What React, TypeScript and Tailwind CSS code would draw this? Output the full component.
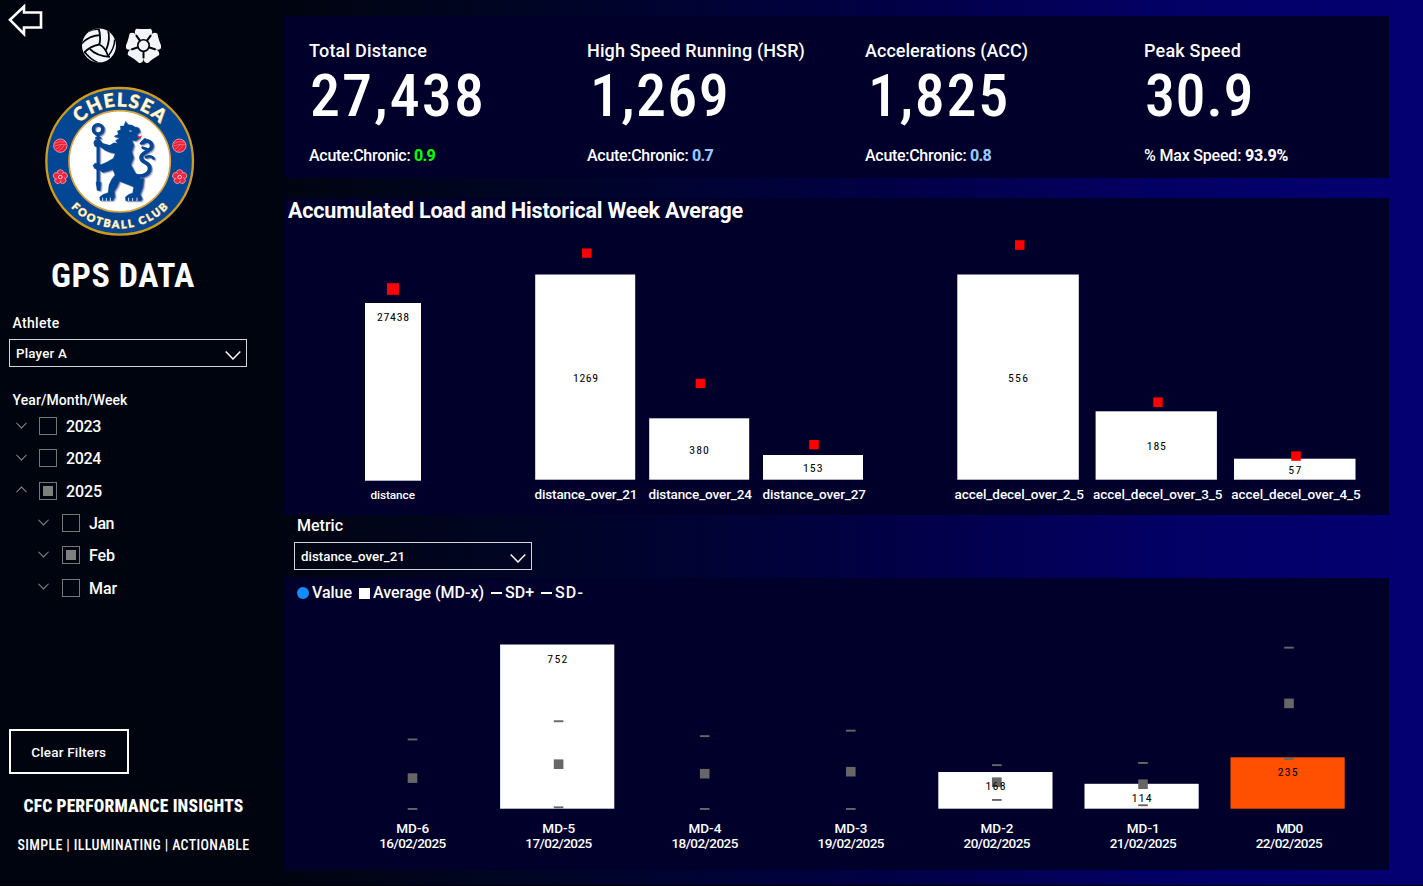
import { useLayoutEffect, useRef } from "react";

/** Text tracked so that its advance equals a given width. */
function Fit({ w, className = "", children }: { w: number; className?: string; children: string }) {
  const ref = useRef<HTMLSpanElement>(null);
  useLayoutEffect(() => {
    const el = ref.current;
    if (!el) return;
    el.style.letterSpacing = "0px";
    const natural = el.getBoundingClientRect().width;
    el.style.letterSpacing = `${(w - natural) / children.length}px`;
  }, [w, children]);
  return (
    <span ref={ref} className={`inline-block whitespace-pre ${className}`}>
      {children}
    </span>
  );
}

const kpis = [
  { title: "Total Distance", tw: 118, value: "27,438", vw: 176, indent: "ml-px", note: "Acute:Chronic: ", nw: 105, ratio: "0.9", rw: 21, color: "text-[#00ff00]" },
  { title: "High Speed Running (HSR)", tw: 218, value: "1,269", vw: 140, indent: "ml-[3px]", note: "Acute:Chronic: ", nw: 105, ratio: "0.7", rw: 21, color: "text-[#93c9ff]" },
  { title: "Accelerations (ACC)", tw: 163, value: "1,825", vw: 142, indent: "ml-[3px]", note: "Acute:Chronic: ", nw: 105, ratio: "0.8", rw: 21, color: "text-[#93c9ff]" },
  { title: "Peak Speed", tw: 97, value: "30.9", vw: 109, indent: "ml-px", note: "% Max Speed: ", nw: 101, ratio: "93.9%", rw: 43, color: "text-white" },
];

const loadBars = [
  { x: 365, w: 56, y: 303, b: 480.7, m: [387, 283.2, 12, 11.6], v: "27438", vx: 377, vw: 32, vy: 321, l: "distance", lx: 370.5, lw: 44.5, fs: 11.8 },
  { x: 535.2, w: 100, y: 274.5, b: 479.7, m: [582, 248.5, 9.6, 9.3], v: "1269", vx: 573, vw: 25, vy: 382, l: "distance_over_21", lx: 534.5, lw: 103, fs: 13.5 },
  { x: 649.2, w: 100, y: 418.3, b: 479.7, m: [695.6, 378.8, 9.6, 9.3], v: "380", vx: 689.3, vw: 19.5, vy: 454, l: "distance_over_24", lx: 648.5, lw: 103.5, fs: 13.5 },
  { x: 763, w: 100, y: 455, b: 479.7, m: [809.2, 440, 9.6, 9.3], v: "153", vx: 803, vw: 19.5, vy: 472, l: "distance_over_27", lx: 762.5, lw: 103.5, fs: 13.5 },
  { x: 957.3, w: 121.5, y: 274.5, b: 479.7, m: [1015, 240.2, 9.5, 9.6], v: "556", vx: 1008, vw: 20, vy: 382, l: "accel_decel_over_2_5", lx: 954.5, lw: 129.5, fs: 13.5 },
  { x: 1095.6, w: 121.3, y: 411.3, b: 479.7, m: [1153.3, 397.4, 9.4, 9.6], v: "185", vx: 1146.8, vw: 19, vy: 450, l: "accel_decel_over_3_5", lx: 1093, lw: 129.5, fs: 13.5 },
  { x: 1234, w: 121.5, y: 458.7, b: 479.7, m: [1291.2, 451.4, 9.6, 9.4], v: "57", vx: 1288.3, vw: 13, vy: 474, l: "accel_decel_over_4_5", lx: 1231.3, lw: 129.5, fs: 13.5 },
];

const days = [
  { c: 412.7, name: "MD-6", date: "16/02/2025", hi: 738.5, avg: 773.3, lo: 808 },
  { c: 558.8, name: "MD-5", date: "17/02/2025", hi: 720.3, avg: 759.4, lo: 806.4, top: 644.5, v: "752", vy: 663 },
  { c: 704.9, name: "MD-4", date: "18/02/2025", hi: 735.2, avg: 768.9, lo: 808 },
  { c: 851, name: "MD-3", date: "19/02/2025", hi: 729.7, avg: 766.9, lo: 808 },
  { c: 997, name: "MD-2", date: "20/02/2025", hi: 764.2, avg: 777.4, lo: 799, top: 772, v: "168", vy: 790.3 },
  { c: 1143.2, name: "MD-1", date: "21/02/2025", hi: 762, avg: 779.4, lo: 804.3, top: 783.8, v: "114", vy: 802.3 },
  { c: 1289.2, name: "MD0", date: "22/02/2025", hi: 646.7, avg: 698.6, lo: 758, top: 757.3, v: "235", vy: 776.3, hot: true },
];

function Chevron({ up = false, w, h, className }: { up?: boolean; w: number; h: number; className: string }) {
  return (
    <svg width={w} height={h} viewBox="0 0 14 8" fill="none" className={className}>
      <path d={up ? "M.5 7.5 7 .9l6.500 6.600" : "M.5.5 7 7.100 13.500.5"} stroke="currentColor" strokeWidth="1.300" />
    </svg>
  );
}

function Ball() {
  return (
    <svg width="34" height="35" viewBox="0 0 102 104">
      <defs>
        <clipPath id="ball"><circle cx="51" cy="52" r="51" /></clipPath>
      </defs>
      <g clipPath="url(#ball)">
        <rect width="102" height="104" fill="#f4f5f8" />
        <g fill="none" stroke="#00040f" strokeWidth="5.500">
          <path d="M49-2Q58 25 52 49Q69 56 78 83" />
          <path d="M52 49Q24 54 6 74" />
          <path d="M-2 47Q22 22 54 21" />
          <path d="M78 4Q86 34 72 66" />
          <path d="M24 63Q44 84 84 86" />
          <path d="M7 70Q22 92 52 106" strokeWidth="4.500" />
          <path d="M20 10Q34 2 52 4" strokeWidth="4" />
          <path d="M98 34Q98 60 78 84" strokeWidth="4.500" />
        </g>
      </g>
    </svg>
  );
}

function Rose() {
  return (
    <g>
      {[0, 72, 144, 216, 288].map((a) => (
        <path key={a} d="M-10-12L-25-35Q-28-44-21-50Q-10-49 0-49Q10-49 21-50Q28-44 25-35L10-12Z" fill="#f4f5f8" transform={`rotate(${a})`} />
      ))}
      {[36, 108, 180, 252, 324].map((a) => (
        <path key={a} d="M0-14V-38" stroke="#00040f" strokeWidth="6" transform={`rotate(${a})`} />
      ))}
      <circle r="17" fill="#f4f5f8" stroke="#00040f" strokeWidth="5" />
    </g>
  );
}

function RedBall({ x, y }: { x: number; y: number }) {
  return (
    <g transform={`translate(${x} ${y})`}>
      <circle r="20" fill="#ed1c32" stroke="#e7b5c4" strokeWidth="2.500" />
      <path d="M-16-7Q-4-14 15-11M-17 1Q0-6 18-4M-13 11Q0 3 4-5M-6 16Q8 9 12-3" fill="none" stroke="#f58796" strokeWidth="2" />
    </g>
  );
}

function RedRose({ x, y }: { x: number; y: number }) {
  return (
    <g transform={`translate(${x} ${y})`}>
      {[0, 72, 144, 216, 288].map((a) => (
        <circle key={a} cy="-12.500" r="9.500" fill="#ef2640" stroke="#f3b9c4" strokeWidth="2" transform={`rotate(${a})`} />
      ))}
      <circle r="11" fill="#ef2640" />
      <circle r="5.500" fill="#ef2640" stroke="#f9cdd5" strokeWidth="3" />
    </g>
  );
}

function Lion() {
  return (
    <g>
      <path d="M174 160V312" strokeWidth="9" />
      <circle cx="174" cy="142" r="14" fill="none" strokeWidth="10" />
      <path d="M165 168H184M166 178H183" strokeWidth="4" />
      <path d="M168 300H182L180 325H171Z" />
      <path d="M257 118L263 128L275 129L283 134L295 137L300 149L290 158L300 167L287 176L275 174L281 190L275 209L280 227L272 248L285 272L303 290L311 288L308 315L300 337L306 350L302 356H257L256 345L267 337L278 333L281 314L263 307L238 297L231 314L222 328L224 344L218 355H180L179 345L190 337L204 332L207 309L215 292L225 279L218 262L203 267L187 271L180 265L163 259L159 250L166 243L182 248L201 240L220 229L226 214L211 211L194 204L181 194L164 193L161 182L165 173L179 174L187 184L209 190L222 182L233 184L226 176L239 168L222 163L235 157L232 147L242 143L241 132L251 132Z" />
      <path d="M285 281C316 286 334 271 327 251C320 236 304 244 303 226C304 208 336 209 335 191C333 177 319 172 309 181" fill="none" strokeWidth="11" strokeLinecap="round" />
      <path d="M318 225Q333 219 340 229M303 184L315 172M320 201L308 197" fill="none" strokeWidth="8" strokeLinecap="round" />
    </g>
  );
}

function Crest() {
  return (
    <svg width="160" height="160" viewBox="0 0 480 480">
      <defs>
        <path id="arcTop" d="M74 238A165 165 0 0 1 404 238" />
        <path id="arcBottom" d="M38 238A201 201 0 0 0 440 238" />
      </defs>
      <circle cx="239" cy="238" r="220" fill="#034694" stroke="#cf9c1d" strokeWidth="7" />
      <circle cx="239" cy="238" r="152" fill="#fff" stroke="#d5a43a" strokeWidth="5" />
      <g fill="#fffbe6" stroke="#c8a24a" strokeWidth="3" paintOrder="stroke" fontFamily="Lato, sans-serif" fontWeight="900" textAnchor="middle">
        <text fontSize="56" letterSpacing="4">
          <textPath href="#arcTop" startOffset="50.500%">CHELSEA</textPath>
        </text>
        <text fontSize="32" letterSpacing="6">
          <textPath href="#arcBottom" startOffset="50.500%">FOOTBALL CLUB</textPath>
        </text>
      </g>
      <RedBall x={61} y={191} />
      <RedBall x={418} y={191} />
      <RedRose x={61} y={285} />
      <RedRose x={419} y={285} />
      <g fill="#c3c5cc" stroke="#c3c5cc" transform="translate(6 5)" opacity=".8"><Lion /></g>
      <g fill="#6470ae" stroke="#6470ae" transform="translate(3 2)"><Lion /></g>
      <g fill="#034694" stroke="#034694"><Lion /></g>
      <path d="M267 144L277 147L270 151Z" fill="#9bb5d8" />
      <path d="M291 161Q301 167 307 158Q304 171 294 168Z" fill="#ee1c2e" />
      <g stroke="#fff" strokeWidth="2.500">
        <path d="M188 347V357M199 348V357M211 347V357M266 347V357M278 348V357M291 347V357" />
      </g>
    </svg>
  );
}

function CheckRow({ label, w, h, on, up, sub }: { label: string; w: number; h: string; on?: boolean; up?: boolean; sub?: boolean }) {
  return (
    <div className={`flex items-center ${h} ${sub ? "pl-[38px]" : "pl-[16px]"}`}>
      <Chevron up={up} w={11} h={7} className="mb-[2px] text-[#8a8a8a]" />
      <span className={`flex h-[18px] w-[18px] items-center justify-center border border-[#777] ${sub ? "ml-[13px]" : "ml-3"}`}>
        {on && <span className="h-[10px] w-[10px] bg-[#7f7f7f]" />}
      </span>
      <Fit w={w} className="ml-[9px] pt-[2px] text-base font-medium leading-5">{label}</Fit>
    </div>
  );
}

function Select({ value, w }: { value: string; w: number }) {
  return (
    <div className="flex h-7 w-[238px] items-center justify-between border border-[#d4d4d8] pl-[6px] pr-[5px]">
      <Fit w={w} className="pt-px text-[13.300px] font-medium leading-5">{value}</Fit>
      <Chevron w={16} h={9} className="mt-[5px] text-white" />
    </div>
  );
}

export default function App() {
  return (
    <div className="flex h-[886px] w-[1423px] overflow-hidden border-b border-black bg-[linear-gradient(90deg,#00040f_0px,#00040f_270px,#000524_520px,#020046_900px,#030064_1160px,#040072_1423px)] font-[Roboto,sans-serif] text-white">
      <aside className="relative w-[284px] shrink-0">
        <svg className="absolute left-[8px] top-[3px]" width="35" height="34" viewBox="0 0 35 34" fill="none">
          <path d="M16 3.500V9.500H33V24.500H16V31L2 16.800Z" stroke="#fff" strokeWidth="2.600" />
        </svg>
        <div className="flex gap-[10px] pl-[82px] pt-[28px]">
          <Ball />
          <svg width="35" height="35" viewBox="-52 -52 104 104"><Rose /></svg>
        </div>
        <div className="mt-[19px] pl-10"><Crest /></div>
        <div className="mt-[15px] h-9 pl-[51px] leading-9 [font-stretch:75%]"><Fit w={144} className="text-[34px] font-bold">GPS DATA</Fit></div>
        <div className="mt-5 h-5 pl-[12.500px] leading-5"><Fit w={47} className="text-sm font-medium leading-5">Athlete</Fit></div>
        <div className="mt-[6px] pl-[9px]"><Select value="Player A" w={51} /></div>
        <div className="mt-[23px] h-5 pl-[12.500px] leading-5"><Fit w={115} className="text-sm font-medium leading-5">Year/Month/Week</Fit></div>
        <div>
          <CheckRow label="2023" w={35} h="h-[32px]" />
          <CheckRow label="2024" w={35} h="h-[32px]" />
          <CheckRow label="2025" w={36} h="h-[33px]" on up />
          <CheckRow label="Jan" w={25} h="h-[32px]" sub />
          <CheckRow label="Feb" w={26} h="h-[32px]" on sub />
          <CheckRow label="Mar" w={28} h="h-[33px]" sub />
        </div>
        <button className="ml-[9px] mt-[125px] flex h-[44.500px] w-[119.500px] items-center justify-center border-2 border-white">
          <Fit w={75} className="pt-[2px] text-[13.500px] font-medium leading-5">Clear Filters</Fit>
        </button>
        <div className="mt-[22.500px] h-5 pl-[23.500px] leading-5 [font-stretch:75%]"><Fit w={220} className="text-[17.500px] font-extrabold leading-5">CFC PERFORMANCE INSIGHTS</Fit></div>
        <div className="mt-[19px] h-5 pl-[17.500px] leading-5 [font-stretch:75%]"><Fit w={232} className="text-sm font-medium leading-5">SIMPLE | ILLUMINATING | ACTIONABLE</Fit></div>
      </aside>

      <main className="w-[1105px] shrink-0 pt-4">
        <section className="grid h-[161.500px] grid-cols-[278px_278px_279px_1fr] bg-[#00002b] pl-[25px] pt-[24.500px]">
          {kpis.map((k) => (
            <div key={k.title} className="flex flex-col items-start">
              <Fit w={k.tw} className="text-[18px] font-medium leading-5">{k.title}</Fit>
              <Fit w={k.vw} className={`mt-[5px] text-[60px] font-medium leading-[60px] [font-stretch:75%] ${k.indent}`}>{k.value}</Fit>
              <div className="mt-5 flex text-base leading-5">
                <Fit w={k.nw} className="font-medium">{k.note}</Fit>
                <Fit w={k.rw} className={`font-extrabold ${k.color}`}>{k.ratio}</Fit>
              </div>
            </div>
          ))}
        </section>

        <section className="mt-5 h-[317.500px] bg-[#00002b]">
          <h2 className="h-[32.500px] pl-[4px] pt-[1.500px] text-[21.500px] font-bold leading-[24px]">
            <Fit w={455}>Accumulated Load and Historical Week Average</Fit>
          </h2>
          <svg width="1105" height="285" viewBox="284 230 1105 285" className="block" fontFamily="Roboto, sans-serif">
            {loadBars.map((b) => (
              <g key={b.l}>
                <rect x={b.x} y={b.y} width={b.w} height={b.b - b.y} fill="#fff" />
                <rect x={b.m[0]} y={b.m[1]} width={b.m[2]} height={b.m[3]} fill="#ff0000" />
                <text x={b.vx} y={b.vy} textLength={b.vw} fontSize="11.800" fill="#000" className="[font-stretch:75%]">{b.v}</text>
                <text x={b.lx} y={499} textLength={b.lw} fontSize={b.fs} fontWeight="500" fill="#fff">{b.l}</text>
              </g>
            ))}
          </svg>
        </section>

        <section className="h-[63px] pl-[10px]">
          <div className="h-5 pl-[3px] pt-px leading-5"><Fit w={46} className="text-base font-medium leading-5">Metric</Fit></div>
          <div className="mt-[7px]"><Select value="distance_over_21" w={104} /></div>
        </section>

        <section className="h-[292px] bg-[#00002b]">
          <div className="flex h-[28px] items-center pl-[13px] pt-[2px] text-base font-medium">
            <span className="h-3 w-3 rounded-full bg-[#118dff]" />
            <Fit w={40} className="ml-[3px]">Value</Fit>
            <span className="ml-[7px] h-[11px] w-[11px] bg-white" />
            <Fit w={111} className="ml-[3px]">Average (MD-x)</Fit>
            <span className="ml-[7px] h-[2px] w-[11px] bg-white" />
            <Fit w={29} className="ml-[3px]">SD+</Fit>
            <span className="ml-[7px] h-[2px] w-[11px] bg-white" />
            <Fit w={29} className="ml-[3px]">SD-</Fit>
          </div>
          <svg width="1105" height="264" viewBox="284 606 1105 264" className="block" fontFamily="Roboto, sans-serif">
            {days.map((d) => (
              <g key={d.name}>
                {d.top && <rect x={d.c - 58.7} y={d.top} width={114.2} height={808.7 - d.top} fill={d.hot ? "#ff4f00" : "#fff"} />}
                <g fill="#666">
                  <rect x={d.c - 5} y={d.hi} width="9.600" height="1.900" />
                  <rect x={d.c - 5} y={d.avg} width="9.600" height="9.600" />
                  <rect x={d.c - 5} y={d.lo} width="9.600" height="1.900" />
                </g>
                {d.v && <text x={d.c - 11.5} y={d.vy} textLength="20" fontSize="11.800" fill="#000" className="[font-stretch:75%]">{d.v}</text>}
                <g fontSize="13.500" fontWeight="500" fill="#fff">
                  <text x={d.name === "MD0" ? d.c - 13 : d.c - 16.5} y="833" textLength={d.name === "MD0" ? 27 : 33}>{d.name}</text>
                  <text x={d.c - 33.5} y="848" textLength="67">{d.date}</text>
                </g>
              </g>
            ))}
          </svg>
        </section>
      </main>
    </div>
  );
}
